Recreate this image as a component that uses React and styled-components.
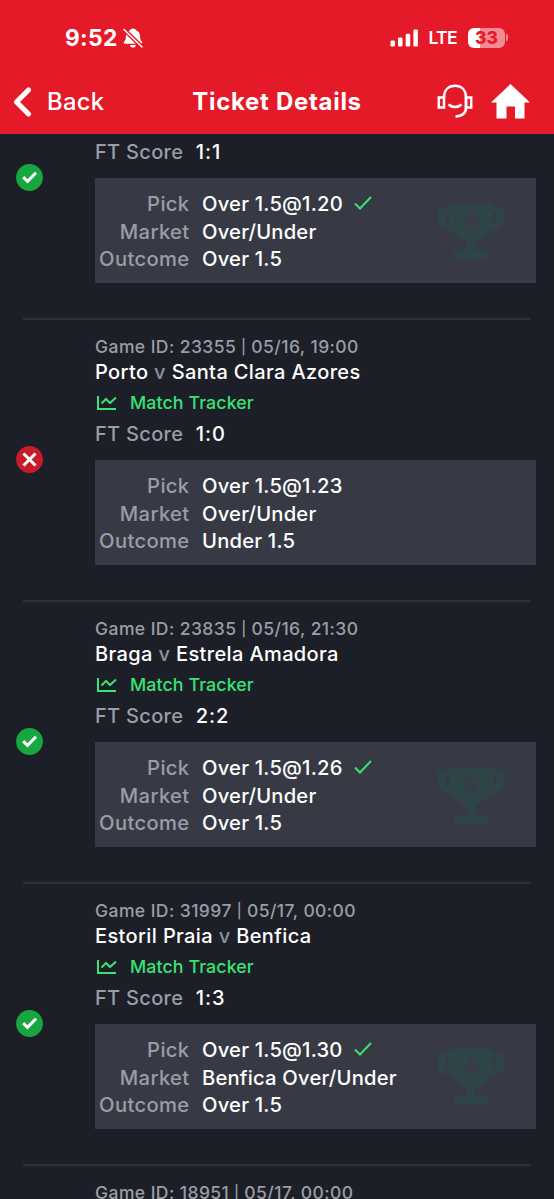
import React from "react"
import styled, { createGlobalStyle, css } from "styled-components"

const GlobalStyle = createGlobalStyle`
  * {
    box-sizing: border-box;
  }

  body {
    margin: 0;
    background-color: #1c1f27;
    font-family: Inter, "Liberation Sans", sans-serif;
    font-weight: 500;
  }
`

const Screen = styled.div`
  height: 1199px;
  display: flex;
  flex-direction: column;
  overflow: hidden;
  background-color: #1c1f27;
  white-space: nowrap;
`

const Header = styled.header`
  flex: none;
  height: 134px;
  background-color: #e51a28;
  color: #ffffff;
`

const StatusBar = styled.div`
  display: flex;
  align-items: center;
  height: 75px;
  padding: 0 46px 0 65px;
`

const Time = styled.span`
  font-size: 22.8px;
  font-weight: 700;
  letter-spacing: 0.3px;
`

const BellIcon = styled.svg`
  margin-left: 5px;
`

const StatusRight = styled.div`
  display: flex;
  align-items: center;
  margin-left: auto;
`

const Network = styled.span`
  margin: 0 11px 0 10px;
  font-size: 17.5px;
  font-weight: 600;
  letter-spacing: -0.6px;
`

const Battery = styled.div`
  width: 37px;
  height: 20px;
  border-radius: 6px;
  background: linear-gradient(to right, #ffffff 33%, #f28c93 33%);
  color: #e51a28;
  font-size: 17.5px;
  font-weight: 800;
  line-height: 20px;
  text-align: center;
`

const BatteryTip = styled.div`
  width: 2px;
  height: 7px;
  margin-left: 1px;
  border-radius: 0 2px 2px 0;
  background-color: #f28c93;
`

const NavBar = styled.nav`
  display: grid;
  grid-template-columns: 1fr auto 1fr;
  align-items: center;
  height: 53px;
  padding: 0 24px;
`

const BackLink = styled.a`
  display: flex;
  align-items: center;
  gap: 15px;
  margin-left: -12px;
  font-size: 23.8px;
  letter-spacing: 0.3px;
`

const NavTitle = styled.h1`
  margin: 0;
  font-size: 24px;
  font-weight: 700;
  letter-spacing: 0.7px;
`

const NavActions = styled.div`
  display: flex;
  justify-content: flex-end;
  align-items: center;
  gap: 18px;
`

const Item = styled.article`
  flex: none;
  display: flex;
  width: 508px;
  height: ${ props => props.$scrolled ? "184px" : "282px" };
  margin-left: 23px;
  padding-top: ${ props => props.$scrolled ? "3px" : "15px" };
  ${ props => !props.$scrolled && css`
    border-top: 2px solid #2e3139;
  ` }
`

const Result = styled.div`
  flex: none;
  align-self: flex-end;
  width: 72px;
  height: 27px;
  margin: 0 0 127px -7px;
`

const Details = styled.div`
  flex: none;
  width: 441px;
  margin-left: 7px;
`

const GameInfo = styled.p`
  margin: 0;
  color: #9b9da6;
  font-size: 17.5px;
  letter-spacing: 0.43px;
  line-height: 23px;
`

const Separator = styled.span`
  margin: 0 -0.3px;
  font-size: 14.5px;
  vertical-align: 1px;
`

const Teams = styled.h2`
  margin: -1px 0 0;
  color: #ffffff;
  font-size: 20px;
  font-weight: 500;
  letter-spacing: 0.37px;
  line-height: 30px;

  span {
    color: #8e919a;
  }
`

const Tracker = styled.a`
  display: flex;
  align-items: center;
  gap: 13px;
  height: 31px;
  margin-bottom: 1px;
  padding-left: 1px;
  color: #3be274;
  font-size: 17.8px;
  letter-spacing: 0.1px;
`

const Score = styled.p`
  display: flex;
  gap: 12.5px;
  margin: 0;
  color: #ffffff;
  font-size: 20px;
  letter-spacing: 0.3px;
  line-height: 30px;
`

const Label = styled.span`
  color: #9b9da6;
`

const ScoreValue = styled.span`
  letter-spacing: 0.9px;
`

const Bet = styled.div`
  display: flex;
  justify-content: space-between;
  height: 104.5px;
  margin-top: 11px;
  padding: 12px 32px 0 4px;
  background-color: #373a44;
`

const BetRows = styled.div`
  display: grid;
  grid-template-columns: 90.5px auto;
  grid-auto-rows: 27.4px;
  column-gap: 12.5px;
  align-items: center;
  color: #ffffff;
  font-size: 20.2px;
  letter-spacing: 0.2px;

  ${ Label } {
    letter-spacing: 0.35px;
    text-align: right;
  }
`

const Value = styled.span`
  display: flex;
  align-items: center;
  gap: 11.5px;
`

const CheckIcon = styled.svg`
  position: relative;
  top: -1px;
`

const TrophyIcon = styled.svg`
  margin-top: 13px;
`

const games = [
  { score: "1:1", pick: "Over 1.5@1.20", market: "Over/Under", outcome: "Over 1.5", won: true, scrolled: true },
  { id: "23355", date: "05/16, 19:00", home: "Porto", away: "Santa Clara Azores", score: "1:0", pick: "Over 1.5@1.23", market: "Over/Under", outcome: "Under 1.5", won: false },
  { id: "23835", date: "05/16, 21:30", home: "Braga", away: "Estrela Amadora", score: "2:2", pick: "Over 1.5@1.26", market: "Over/Under", outcome: "Over 1.5", won: true },
  { id: "31997", date: "05/17, 00:00", home: "Estoril Praia", away: "Benfica", score: "1:3", pick: "Over 1.5@1.30", market: "Benfica Over/Under", outcome: "Over 1.5", won: true },
]

const Bell = () => (
  <BellIcon width="20" height="20" viewBox="0 0 20 20" fill="#ffffff">
    <path d="M10 0.5c1.6 0 2.6.8 3 1.7 2.9 1 4 3.200 4.100 6.300.1 3.300.7 4 1.800 5.200.7.800.4 2-.8 2H1.900c-1.200 0-1.500-1.200-.8-2C2.200 12.500 2.800 11.800 2.900 8.500c.1-3.100 1.200-5.300 4.100-6.300C7.400 1.300 8.400.5 10 .5Z" />
    <path d="M7 17h6c-.3 1.600-1.500 2.600-3 2.600S7.300 18.600 7 17Z" />
    <path d="M1 1.500 19 19" stroke="#e51a28" strokeWidth="4.200" />
    <path d="M1 1.500 19 19" stroke="#ffffff" strokeWidth="1.500" strokeLinecap="round" />
  </BellIcon>
)

const Signal = () => (
  <svg width="28" height="18" viewBox="0 0 28 18" fill="#ffffff">
    <rect x="0.500" y="11.500" width="4.500" height="6" rx="1.200" />
    <rect x="8" y="8.500" width="4.500" height="9" rx="1.200" />
    <rect x="15.700" y="4.800" width="4.500" height="12.700" rx="1.200" />
    <rect x="23.400" y="0.500" width="4.500" height="17" rx="1.200" />
  </svg>
)

const Support = () => (
  <svg width="36" height="36" viewBox="0 0 36 36" fill="none" stroke="#ffffff" strokeWidth="2.500">
    <rect x="1.800" y="13.500" width="5.200" height="10" />
    <rect x="29" y="13.500" width="5.200" height="10" />
    <path d="M7 13.500C7 6 11.500 1.800 18 1.800S29 6 29 13.500v10c0 5.500-3.500 8.600-10.500 8.900" />
    <path d="M11.500 20.500c3.500 3.300 9.500 3.300 13 0" />
  </svg>
)

const Home = () => (
  <svg width="39" height="35" viewBox="0 0 39 35" fill="#ffffff">
    <path d="M19.500 0 39 18.500h-5.500V34.500H24V22.500h-8.500v12H5.500v-16H0Z" />
  </svg>
)

const Trophy = () => (
  <TrophyIcon width="66" height="57" viewBox="0 0 66 57">
    <path d="M11 0h44v4h11v13c0 5-5 9-13 10-3 5-9 9-16 12v9h13v8H16v-8h13v-9c-7-3-13-7-16-12C5 26 0 22 0 17V4h11ZM8 9v8c0 2 1 3 3 4V9ZM58 9h-3v12c2-1 3-2 3-4Z" fill="#2f4447" fillRule="evenodd" />
    <path d="M33 6 35.900 14.500 44.400 14.500 37.700 19.500 40.100 27.700 33 22.800 25.900 27.700 28.300 19.500 21.600 14.500 30.100 14.500Z" fill="#393c47" />
  </TrophyIcon>
)

const ResultIcon = ({ won }) => (
  <svg width="27" height="27" viewBox="0 0 27 27" fill="none" stroke="#ffffff" strokeWidth="3">
    <circle cx="13.500" cy="13.500" r="13.400" fill={ won ? "#17a63f" : "#c91c2b" } stroke="none" />
    <path d={ won ? "M7.200 13.200 11.500 17.300 20 8.700" : "M7.500 7.500l12 12M19.500 7.500l-12 12" } />
  </svg>
)

const GameItem = ({ game }) => {
  const { id, date, home, away, score, pick, market, outcome, won, scrolled } = game

  return (
    <Item $scrolled={ scrolled }>
      <Result>
        <ResultIcon won={ won } />
      </Result>
      <Details>
        { !scrolled && <>
          <GameInfo>Game ID: { id } <Separator>|</Separator> { date }</GameInfo>
          <Teams>{ home } <span>v</span> { away }</Teams>
          <Tracker>
            <svg width="21" height="16" viewBox="0 0 21 16" fill="none" stroke="currentColor" strokeWidth="2">
              <path d="M2 1v13h18M5.500 8.500l4.500-4.500 4 4L20 2.500" />
            </svg>
            Match Tracker
          </Tracker>
        </> }
        <Score><Label>FT Score</Label><ScoreValue>{ score }</ScoreValue></Score>
        <Bet>
          <BetRows>
            <Label>Pick</Label>
            <Value>
              { pick }
              { won && <CheckIcon width="18" height="14" viewBox="0 0 18 14" fill="none" stroke="#3be274" strokeWidth="2">
                <path d="M1 7.500 6 12.500 17 1" />
              </CheckIcon> }
            </Value>
            <Label>Market</Label>
            <Value>{ market }</Value>
            <Label>Outcome</Label>
            <Value>{ outcome }</Value>
          </BetRows>
          { won && <Trophy /> }
        </Bet>
      </Details>
    </Item>
  )
}

export default function App() {
  return (
    <Screen>
      <GlobalStyle />
      <Header>
        <StatusBar>
          <Time>9:52</Time>
          <Bell />
          <StatusRight>
            <Signal />
            <Network>LTE</Network>
            <Battery>33</Battery>
            <BatteryTip />
          </StatusRight>
        </StatusBar>
        <NavBar>
          <BackLink>
            <svg width="20" height="30" viewBox="0 0 20 30" fill="none" stroke="#ffffff" strokeWidth="5" strokeLinecap="round" strokeLinejoin="round">
              <path d="M16.500 3 4.500 15l12 12" />
            </svg>
            Back
          </BackLink>
          <NavTitle>Ticket Details</NavTitle>
          <NavActions>
            <Support />
            <Home />
          </NavActions>
        </NavBar>
      </Header>
      { games.map((game, index) => <GameItem key={ index } game={ game } />) }
      <Item>
        <Result />
        <Details>
          <GameInfo>Game ID: 18951 <Separator>|</Separator> 05/17, 00:00</GameInfo>
        </Details>
      </Item>
    </Screen>
  )
}
